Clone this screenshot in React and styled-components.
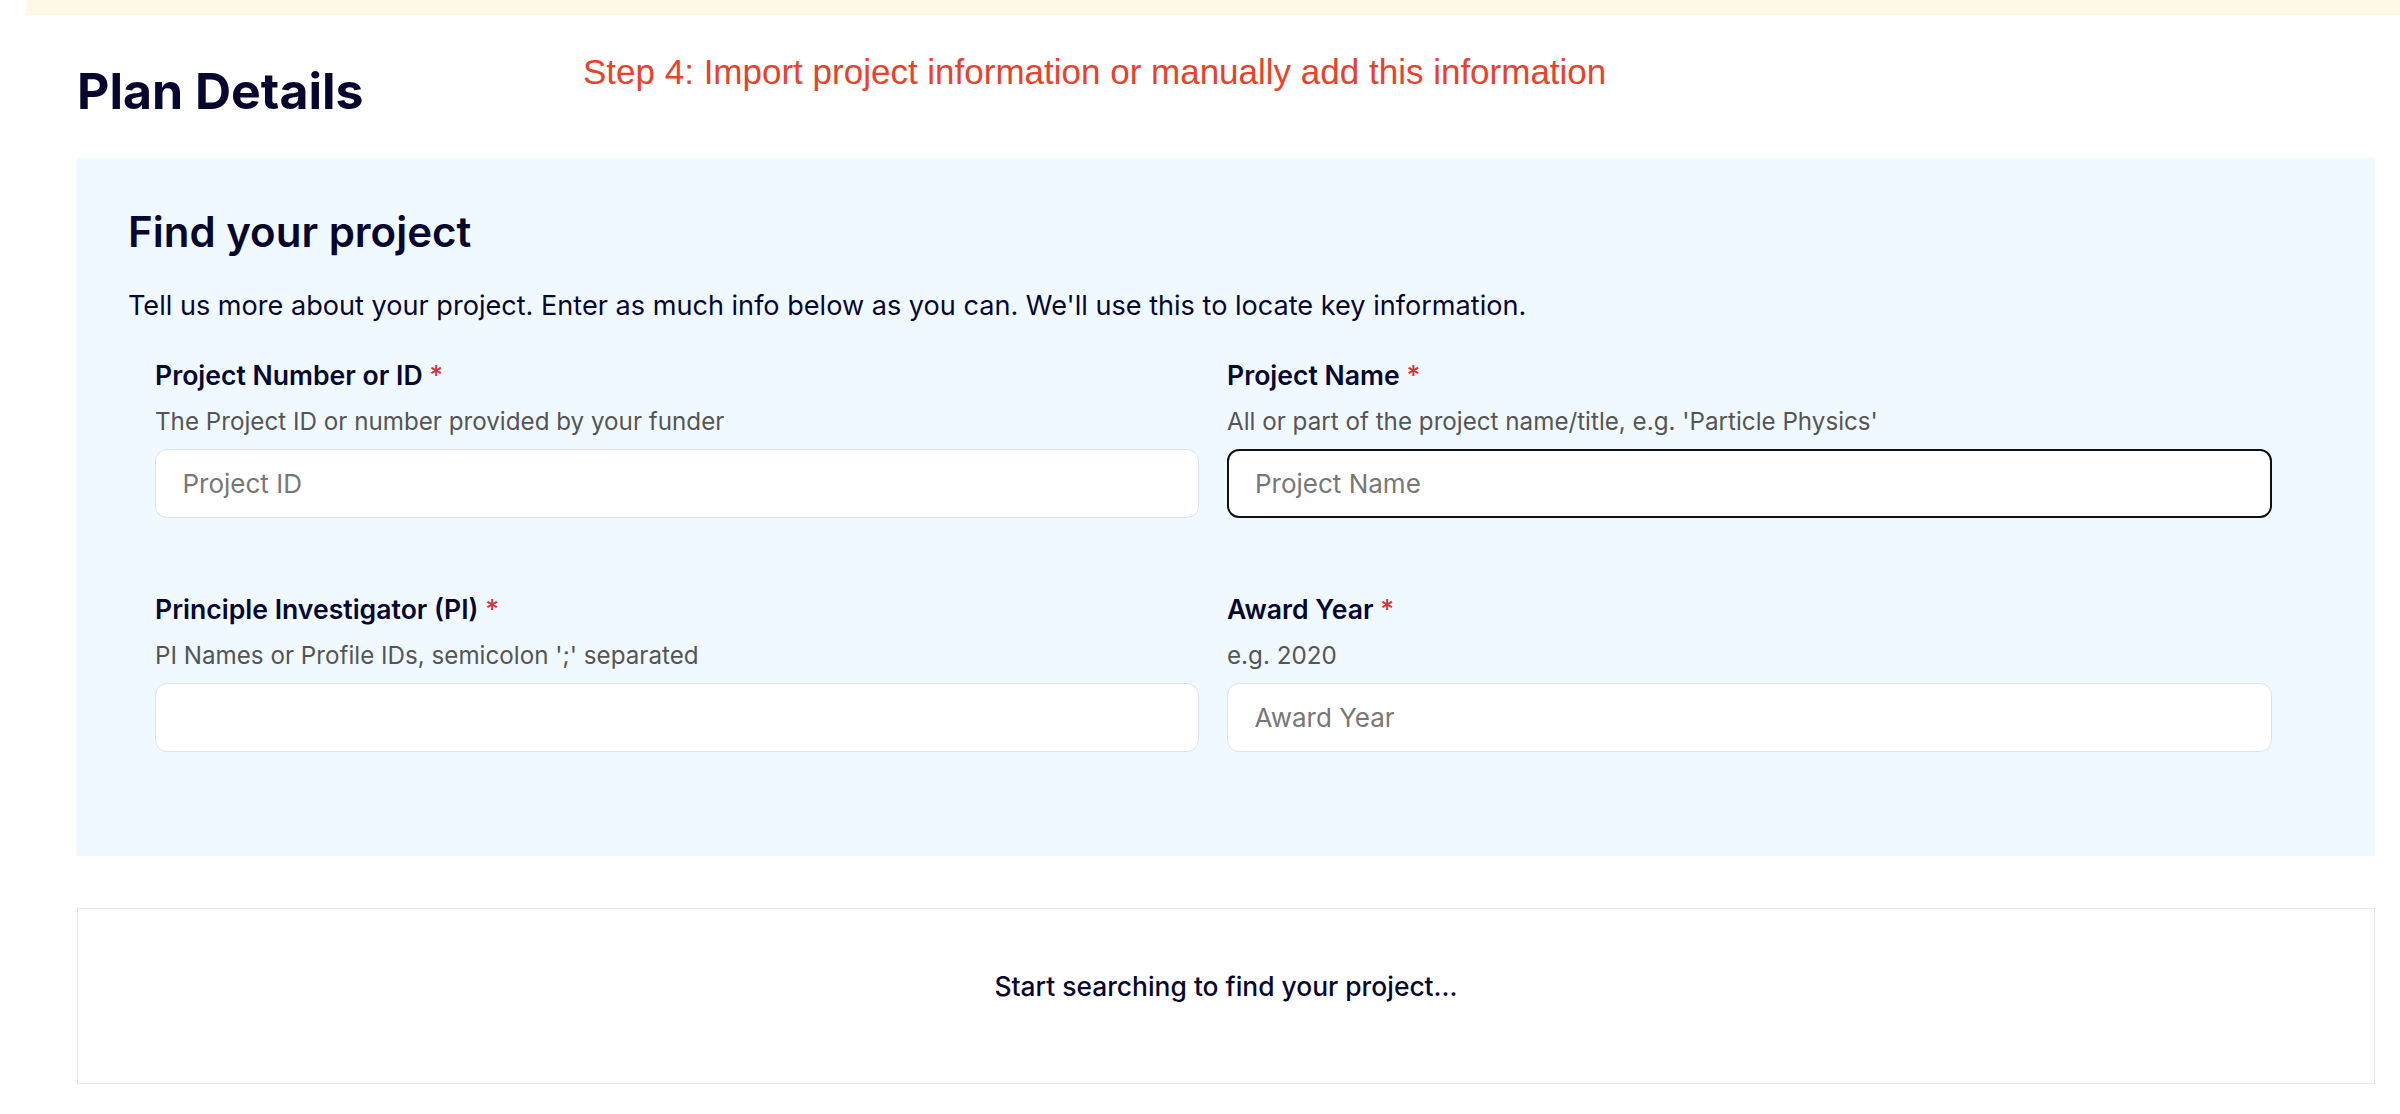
import React from "react";
import styled, { createGlobalStyle } from "styled-components";

const GlobalStyle = createGlobalStyle`
  html, body {
    margin: 0;
    padding: 0;
    background: #ffffff;
  }
  body {
    font-family: Inter, "Noto Sans", sans-serif;
    color: #07072f;
  }
  * { box-sizing: border-box; }
`;

const Page = styled.div`
  position: relative;
  padding-left: 26px;
  min-height: 1114px;
`;

const Banner = styled.div`
  height: 15px;
  background: #fff8e6;
`;

const Main = styled.main`
  margin: 0 25px 0 51px;
`;

const Header = styled.header`
  padding-top: 46px;
  height: 143px;
`;

const PageTitle = styled.h1`
  margin: 0;
  font-family: Inter, "Noto Sans", sans-serif;
  font-weight: 700;
  font-size: 50px;
  line-height: 60px;
  letter-spacing: 0;
  color: #06062e;
`;

const Annotation = styled.div`
  position: absolute;
  top: 52px;
  left: 583px;
  font-family: "Liberation Sans", Arial, sans-serif;
  font-size: 35px;
  line-height: normal;
  color: #ea412c;
  white-space: nowrap;
`;

const Panel = styled.section`
  background: #f0f9ff;
  padding: 48px 51px 104px 51px;
`;

const PanelTitle = styled.h2`
  margin: 0;
  font-weight: 600;
  font-size: 42px;
  line-height: 51px;
  color: #06062e;
`;

const Intro = styled.p`
  margin: 30px 0 0 0;
  font-size: 27.1px;
  line-height: 38px;
  font-weight: 400;
  color: #07072f;
`;

const FieldGrid = styled.div`
  display: grid;
  grid-template-columns: 1044px 1045px;
  column-gap: 28px;
  row-gap: 73px;
  margin: 32px 0 0 27px;
`;

const Field = styled.div`
  display: flex;
  flex-direction: column;
`;

const Label = styled.label`
  font-weight: 600;
  font-size: 26.6px;
  line-height: 36px;
  color: #07072f;
`;

const Required = styled.span`
  color: #d3343c;
  font-weight: 500;
`;

const Help = styled.div`
  margin-top: 12px;
  font-size: 24.2px;
  line-height: 34px;
  color: #555555;
`;

const Input = styled.input`
  margin-top: 10px;
  height: 69px;
  width: 100%;
  border-radius: 12px;
  border: ${(p) => (p.$active ? "2px solid #111111" : "1.5px solid #dfe2e7")};
  background: #ffffff;
  padding: 0 0 0 ${(p) => (p.$active ? "26px" : "26.5px")};
  font-family: Inter, "Noto Sans", sans-serif;
  font-size: 26px;
  color: #07072f;
  outline: none;
  &::placeholder {
    color: #777777;
  }
`;

const ResultsBox = styled.div`
  margin-top: 52px;
  height: 176px;
  border: 1.5px solid #e7e7e7;
  display: flex;
  align-items: center;
  justify-content: center;
  padding-bottom: 20px;
`;

const ResultsText = styled.div`
  font-size: 26.4px;
  font-weight: 500;
  color: #07072f;
`;

const fields = [
  {
    label: "Project Number or ID",
    help: "The Project ID or number provided by your funder",
    placeholder: "Project ID",
  },
  {
    label: "Project Name",
    help: "All or part of the project name/title, e.g. 'Particle Physics'",
    placeholder: "Project Name",
    active: true,
  },
  {
    label: "Principle Investigator (PI)",
    help: "PI Names or Profile IDs, semicolon ';' separated",
    placeholder: "",
  },
  {
    label: "Award Year",
    help: "e.g. 2020",
    placeholder: "Award Year",
  },
];

export default function App() {
  return (
    <>
      <GlobalStyle />
      <Page>
        <Banner />
        <Main>
          <Header>
            <PageTitle>Plan Details</PageTitle>
          </Header>
          <Panel>
            <PanelTitle>Find your project</PanelTitle>
            <Intro>
              Tell us more about your project. Enter as much info below as you can. We'll use this
              to locate key information.
            </Intro>
            <FieldGrid>
              {fields.map((f) => (
                <Field key={f.label}>
                  <Label>
                    {f.label} <Required>*</Required>
                  </Label>
                  <Help>{f.help}</Help>
                  <Input placeholder={f.placeholder} $active={f.active} readOnly />
                </Field>
              ))}
            </FieldGrid>
          </Panel>
          <ResultsBox>
            <ResultsText>Start searching to find your project...</ResultsText>
          </ResultsBox>
        </Main>
        <Annotation>Step 4: Import project information or manually add this information</Annotation>
      </Page>
    </>
  );
}
